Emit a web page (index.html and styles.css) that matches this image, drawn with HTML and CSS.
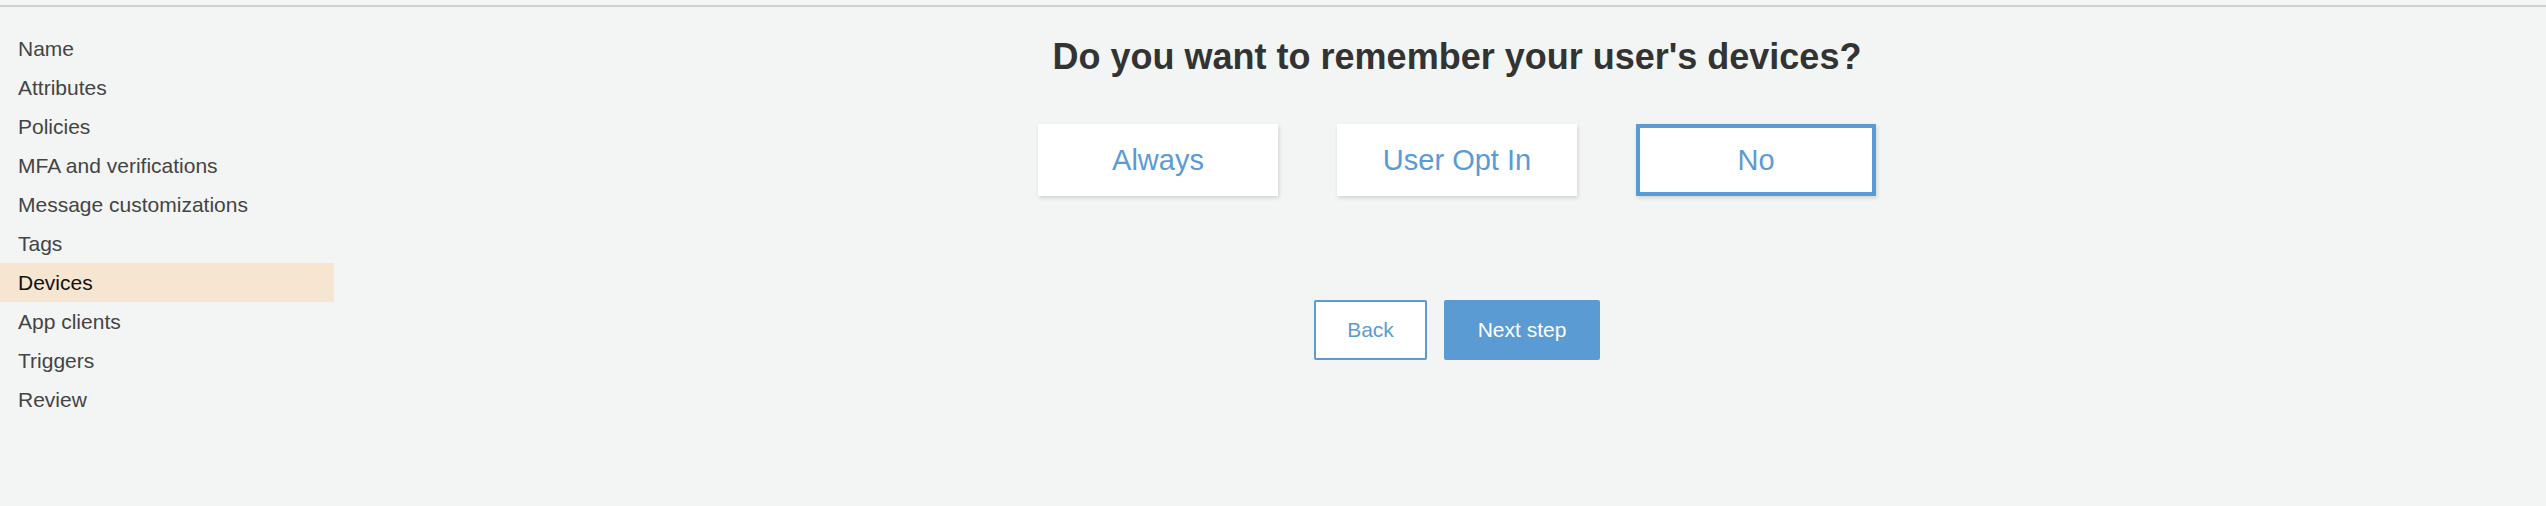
FILE: index.html
```html
<!DOCTYPE html>
<html lang="en">
<head>
<meta charset="utf-8">
<title>Devices</title>
<link rel="stylesheet" href="styles.css">
</head>
<body>
<div class="top-rule"></div>
<div class="layout">
  <nav class="sidebar">
    <a class="nav-item">Name</a>
    <a class="nav-item">Attributes</a>
    <a class="nav-item">Policies</a>
    <a class="nav-item">MFA and verifications</a>
    <a class="nav-item">Message customizations</a>
    <a class="nav-item">Tags</a>
    <a class="nav-item active">Devices</a>
    <a class="nav-item">App clients</a>
    <a class="nav-item">Triggers</a>
    <a class="nav-item">Review</a>
  </nav>
  <main class="main">
    <h1 class="title">Do you want to remember your user's devices?</h1>
    <div class="options">
      <button class="option">Always</button>
      <button class="option">User Opt In</button>
      <button class="option selected">No</button>
    </div>
    <div class="actions">
      <button class="btn btn-back">Back</button>
      <button class="btn btn-next">Next step</button>
    </div>
  </main>
</div>
</body>
</html>
```
FILE: styles.css
```css
* { box-sizing: border-box; }
html, body {
  margin: 0;
  padding: 0;
  background: #f3f5f4;
  font-family: "Liberation Sans", Arial, Helvetica, sans-serif;
}
body { height: 506px; overflow: hidden; }

.top-rule {
  margin-top: 5px;
  height: 2px;
  background: #cfd1d0;
}

.layout {
  display: flex;
}

.sidebar {
  width: 334px;
  flex: none;
  padding-top: 22px;
  display: flex;
  flex-direction: column;
}
.nav-item {
  display: block;
  height: 39px;
  line-height: 39px;
  padding-left: 18px;
  font-size: 21px;
  color: #444;
  white-space: nowrap;
}
.nav-item.active {
  background: #f5e5d1;
  color: #111;
}

.main {
  flex: 1;
  padding-left: 34px;
  display: flex;
  flex-direction: column;
  align-items: center;
}

.title {
  margin: 30px 0 0;
  font-size: 36px;
  line-height: 40px;
  font-weight: bold;
  color: #323333;
}

.options {
  margin-top: 47px;
  display: flex;
  gap: 59px;
}
.option {
  width: 240px;
  height: 72px;
  border: 4px solid #fff;
  background: #fff;
  box-shadow: 1px 2px 4px rgba(0, 0, 0, 0.14);
  font-family: inherit;
  font-size: 29px;
  color: #5a9bd4;
  display: flex;
  align-items: center;
  justify-content: center;
  padding: 0;
}
.option.selected {
  border-color: #5a9bd4;
}

.actions {
  margin-top: 104px;
  display: flex;
  gap: 17px;
}
.btn {
  height: 60px;
  font-family: inherit;
  font-size: 21px;
  padding: 0;
  border-radius: 2px;
  display: flex;
  align-items: center;
  justify-content: center;
}
.btn-back {
  width: 113px;
  background: #fff;
  color: #5a9bd4;
  border: 2px solid #5a9bd4;
}
.btn-next {
  width: 156px;
  background: #5a9bd4;
  color: #fff;
  border: none;
}
```
